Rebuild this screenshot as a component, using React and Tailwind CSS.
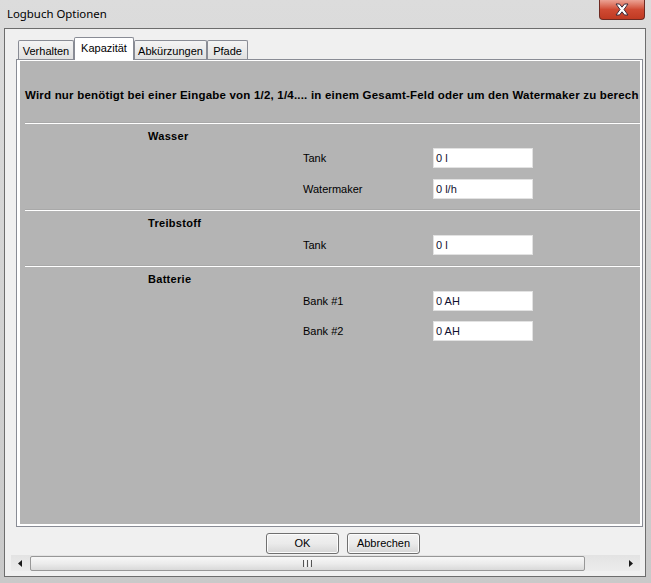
import React from "react";

const FONT = { fontFamily: '"Liberation Sans", Arial, sans-serif' };

function Tab({ label, selected, w }) {
  if (selected) {
    return (
      <div
        className={`relative z-10 -mb-px h-[23px] ${w} bg-white border border-b-0 border-[#898c95] rounded-t-[2px] flex items-start justify-center pt-[4px] text-[11px] leading-[13px] text-black`}
      >
        {label}
      </div>
    );
  }
  return (
    <div
      className={`h-[19px] ${w} bg-gradient-to-b from-[#f4f4f4] to-[#e1e1e1] border border-b-0 border-[#898c95] rounded-t-[2px] flex items-start justify-center pt-[4px] text-[11px] leading-[13px] text-black`}
    >
      {label}
    </div>
  );
}

function Sep({ mt }) {
  return (
    <div className={`${mt} ml-[5px] h-[2px] flex flex-col`}>
      <div className="h-px bg-[#a9a9a9]" />
      <div className="h-px bg-white" />
    </div>
  );
}

function Heading({ children, mt }) {
  return (
    <div className={`${mt} pl-[128px] text-[11px] leading-[13px] font-bold tracking-[0.3px] text-black`}>
      {children}
    </div>
  );
}

function Row({ label, value, mt }) {
  return (
    <div className={`${mt} flex items-center h-[20px]`}>
      <div className="pl-[283px] w-[413px] text-[11px] leading-[13px] text-black">
        {label}
      </div>
      <div className="w-[100px] h-[20px] bg-white border border-[#e2e2e2] flex items-center pl-[2px] text-[11px] leading-[13px] text-[#101030]">
        {value}
      </div>
    </div>
  );
}

function Button({ children }) {
  return (
    <div className="w-[73px] h-[21px] rounded-[3px] border border-[#707070] bg-gradient-to-b from-[#f2f2f2] via-[#ebebeb] to-[#d6d6d6] flex items-center justify-center text-[11px] leading-[13px] text-black shadow-[inset_0_0_0_1px_#fcfcfc]">
      {children}
    </div>
  );
}

export default function App() {
  return (
    <div
      className="w-[651px] h-[583px] overflow-hidden flex flex-col bg-gradient-to-b from-[#dcdcdc] via-[#d3d3d3] to-[#c9c9c9]"
      style={FONT}
    >
      {/* Title bar */}
      <div className="h-[28px] flex items-start shrink-0">
        <div
          className="ml-[7px] mt-[6px] text-[11.4px] leading-[16px] text-black"
          style={{ fontFamily: '"Noto Sans", "Open Sans", sans-serif' }}
        >
          Logbuch Optionen
        </div>
        <div className="ml-auto mr-[6px] w-[46px] h-[20px] rounded-b-[4px] border border-t-0 border-[#6e2a22] bg-gradient-to-b from-[#eba294] via-[#cf4a33] to-[#c03a22] flex items-center justify-center">
          <svg width="16" height="13" viewBox="0 0 16 13">
            <path
              d="M2 1 L5.5 1 L8 4.2 L10.5 1 L14 1 L10 6.5 L14 12 L10.5 12 L8 8.8 L5.5 12 L2 12 L6 6.5 Z"
              fill="#ffffff"
              stroke="#3a2a3a"
              strokeWidth="1"
              strokeLinejoin="round"
            />
          </svg>
        </div>
      </div>

      {/* Client area */}
      <div className="ml-[4px] w-[642px] h-[549px] border border-[#6d6d6d] bg-[#f0f0f0] flex flex-col shrink-0">
        {/* Tabs */}
        <div className="mt-[8px] ml-[13px] h-[22px] flex items-end">
          <Tab label="Verhalten" w="w-[56px]" />
          <Tab label="Kapazität" w="w-[60px]" selected />
          <Tab label="Abkürzungen" w="w-[73px]" />
          <Tab label="Pfade" w="w-[41px]" />
        </div>

        {/* Panel */}
        <div className="ml-[11px] w-[627px] h-[468px] border border-[#898c95] bg-white pl-[3px] pr-[2px] pt-px pb-[2px] flex">
          <div className="flex-1 bg-[#b4b4b4] overflow-hidden flex flex-col">
            <div className="mt-[28px] pl-[5px] whitespace-nowrap text-[11.5px] leading-[13px] font-bold tracking-[0.2px] text-black">
              Wird nur benötigt bei einer Eingabe von 1/2, 1/4.... in einem Gesamt-Feld oder um den Watermaker zu berech
            </div>
            <Sep mt="mt-[20px]" />
            <Heading mt="mt-[6px]">Wasser</Heading>
            <Row mt="mt-[5px]" label="Tank" value="0 l" />
            <Row mt="mt-[11px]" label="Watermaker" value="0 l/h" />
            <Sep mt="mt-[10px]" />
            <Heading mt="mt-[6px]">Treibstoff</Heading>
            <Row mt="mt-[5px]" label="Tank" value="0 l" />
            <Sep mt="mt-[10px]" />
            <Heading mt="mt-[6px]">Batterie</Heading>
            <Row mt="mt-[5px]" label="Bank #1" value="0 AH" />
            <Row mt="mt-[10px]" label="Bank #2" value="0 AH" />
          </div>
        </div>

        {/* Buttons */}
        <div className="mt-[6px] pl-[261px] flex gap-[8px]">
          <Button>OK</Button>
          <Button>Abbrechen</Button>
        </div>

        {/* Scrollbar */}
        <div className="mt-px ml-[6px] w-[629px] h-[16px] bg-gradient-to-b from-[#e3e3e3] to-[#ececec] flex items-center">
          <div className="w-[18px] h-[16px] flex items-center justify-center">
            <svg width="4" height="7" viewBox="0 0 4 7">
              <path d="M4 0 L0 3.5 L4 7 Z" fill="#1a1a1a" />
            </svg>
          </div>
          <div className="ml-px w-[555px] h-[15px] rounded-[2px] border border-[#979797] bg-gradient-to-b from-[#f7f7f7] via-[#ececec] to-[#d9d9d9] flex items-center justify-center">
            <div className="flex gap-[1px]">
              <div className="w-px h-[7px] bg-[#555]" />
              <div className="w-px h-[7px] bg-[#f8f8f8]" />
              <div className="w-px h-[7px] bg-[#555]" />
              <div className="w-px h-[7px] bg-[#f8f8f8]" />
              <div className="w-px h-[7px] bg-[#555]" />
            </div>
          </div>
          <div className="flex-1" />
          <div className="w-[18px] h-[16px] flex items-center justify-center">
            <svg width="4" height="7" viewBox="0 0 4 7">
              <path d="M0 0 L4 3.5 L0 7 Z" fill="#1a1a1a" />
            </svg>
          </div>
        </div>
      </div>
    </div>
  );
}
